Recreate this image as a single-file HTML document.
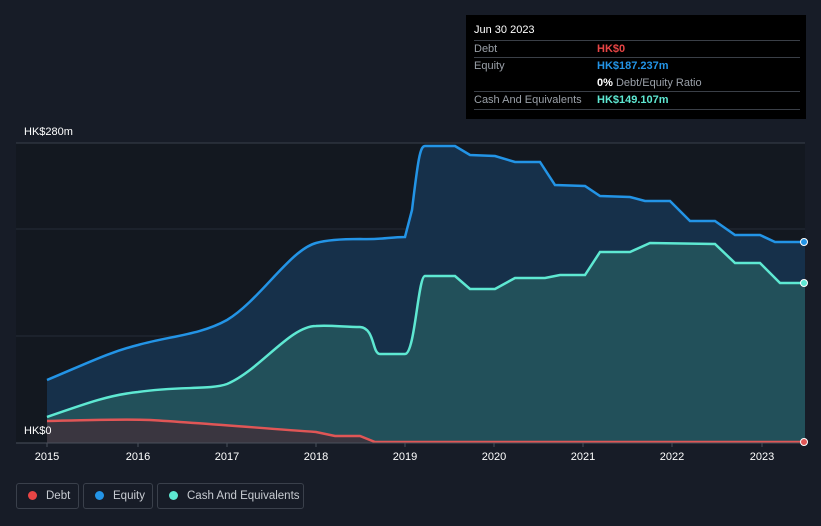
<!DOCTYPE html>
<html><head><style>
body{margin:0;width:821px;height:526px;background:#171c27;font-family:"Liberation Sans",sans-serif;overflow:hidden;position:relative}
.tt{position:absolute;left:466px;top:15px;width:340px;height:104px;background:#000;color:#fff;font-size:11px}
.tt .r{position:absolute;left:8px;right:6px;border-top:1px solid #3a3f47}
.lg{position:absolute;top:483px;height:26px;border:1px solid #3a404b;border-radius:3px;color:#c8ccd2;font-size:11.5px;line-height:24px;box-sizing:border-box;white-space:nowrap;overflow:hidden}
.lg i{display:inline-block;width:9px;height:9px;border-radius:50%;margin:0 9px 0 11px;vertical-align:-1px}
.ax{position:absolute;top:451px;color:#fff;font-size:11px;width:40px;text-align:center}
</style></head><body>
<svg width="821" height="526" style="position:absolute;left:0;top:0">
<rect x="16" y="143" width="789" height="300" fill="#131820"/>
<line x1="16" y1="143" x2="805" y2="143" stroke="#3a404b"/>
<line x1="16" y1="229" x2="805" y2="229" stroke="#262c37"/>
<line x1="16" y1="336" x2="805" y2="336" stroke="#262c37"/>
<path d="M47,380 C90,362 110,352 138,345 C170,336 200,335 227,320 C260,300 290,250 316,243 C330,239 350,239 360,239 C380,240 390,237 405,237 L412,210 C418,160 420,146 425,146 L455,146 L470,155 L495,156 L515,162 L540,162 L555,185 L585,186 L600,196 L630,197 L645,201 L670,201 L690,221 L715,221 L735,235 L760,235 L775,242 L805,242 L805,443 L47,443Z" fill="#16304a"/>
<path d="M47,417 C90,402 110,395 138,392 C180,386 210,390 227,384 C260,370 290,326 316,326 C330,325 345,327 360,327 C375,328 372,354 380,354 L405,354 C415,354 418,276 425,276 L455,276 L470,289 L495,289 L515,278 L545,278 L560,275 L585,275 L600,252 L630,252 L650,243 L715,244 L735,263 L760,263 L780,283 L805,283 L805,443 L47,443Z" fill="#22505a"/>
<path d="M47,421 C100,420 120,419 150,420 C200,423 260,428 316,432 L335,436 L360,436 L375,442 L805,442 L805,443 L47,443Z" fill="#3a3640"/>
<path d="M47,380 C90,362 110,352 138,345 C170,336 200,335 227,320 C260,300 290,250 316,243 C330,239 350,239 360,239 C380,240 390,237 405,237 L412,210 C418,160 420,146 425,146 L455,146 L470,155 L495,156 L515,162 L540,162 L555,185 L585,186 L600,196 L630,197 L645,201 L670,201 L690,221 L715,221 L735,235 L760,235 L775,242 L805,242" fill="none" stroke="#2394e6" stroke-width="2.5"/>
<path d="M47,417 C90,402 110,395 138,392 C180,386 210,390 227,384 C260,370 290,326 316,326 C330,325 345,327 360,327 C375,328 372,354 380,354 L405,354 C415,354 418,276 425,276 L455,276 L470,289 L495,289 L515,278 L545,278 L560,275 L585,275 L600,252 L630,252 L650,243 L715,244 L735,263 L760,263 L780,283 L805,283" fill="none" stroke="#5ee8d2" stroke-width="2.5"/>
<path d="M47,421 C100,420 120,419 150,420 C200,423 260,428 316,432 L335,436 L360,436 L375,442 L805,442" fill="none" stroke="#e05656" stroke-width="2.5"/>
<line x1="16" y1="443" x2="805" y2="443" stroke="#4a505b"/>
<g stroke="#4a505b"><line x1="47" y1="443" x2="47" y2="447"/><line x1="138" y1="443" x2="138" y2="447"/><line x1="227" y1="443" x2="227" y2="447"/><line x1="316" y1="443" x2="316" y2="447"/><line x1="405" y1="443" x2="405" y2="447"/><line x1="494" y1="443" x2="494" y2="447"/><line x1="583" y1="443" x2="583" y2="447"/><line x1="672" y1="443" x2="672" y2="447"/><line x1="762" y1="443" x2="762" y2="447"/></g>
<circle cx="804" cy="242" r="3.5" fill="#2394e6" stroke="#fff" stroke-width="1"/>
<circle cx="804" cy="283" r="3.5" fill="#5ee8d2" stroke="#fff" stroke-width="1"/>
<circle cx="804" cy="442" r="3.5" fill="#e05656" stroke="#fff" stroke-width="1"/>
</svg>
<div style="position:absolute;left:24px;top:126px;color:#fff;font-size:11px">HK$280m</div>
<div style="position:absolute;left:24px;top:425px;color:#fff;font-size:11px">HK$0</div>
<div class="ax" style="left:27px">2015</div><div class="ax" style="left:118px">2016</div><div class="ax" style="left:207px">2017</div><div class="ax" style="left:296px">2018</div><div class="ax" style="left:385px">2019</div><div class="ax" style="left:474px">2020</div><div class="ax" style="left:563px">2021</div><div class="ax" style="left:652px">2022</div><div class="ax" style="left:742px">2023</div>
<div class="tt">
<div style="position:absolute;left:8px;top:9px">Jun 30 2023</div>
<div class="r" style="top:25px"></div>
<div style="position:absolute;left:8px;top:28px;color:#9aa0a8">Debt</div><div style="position:absolute;left:131px;top:28px;color:#e84545;font-weight:bold">HK$0</div>
<div class="r" style="top:42px"></div>
<div style="position:absolute;left:8px;top:45px;color:#9aa0a8">Equity</div><div style="position:absolute;left:131px;top:45px;color:#2394e6;font-weight:bold">HK$187.237m</div>
<div style="position:absolute;left:131px;top:62px;color:#9aa0a8"><b style="color:#fff">0%</b> Debt/Equity Ratio</div>
<div class="r" style="top:76px"></div>
<div style="position:absolute;left:8px;top:79px;color:#9aa0a8">Cash And Equivalents</div><div style="position:absolute;left:131px;top:79px;color:#5ee8d2;font-weight:bold">HK$149.107m</div>
<div class="r" style="top:94px"></div>
</div>
<div class="lg" style="left:16px;width:63px"><i style="background:#e84545"></i>Debt</div>
<div class="lg" style="left:83px;width:70px"><i style="background:#2394e6"></i>Equity</div>
<div class="lg" style="left:157px;width:147px"><i style="background:#5ee8d2"></i>Cash And Equivalents</div>
</body></html>
